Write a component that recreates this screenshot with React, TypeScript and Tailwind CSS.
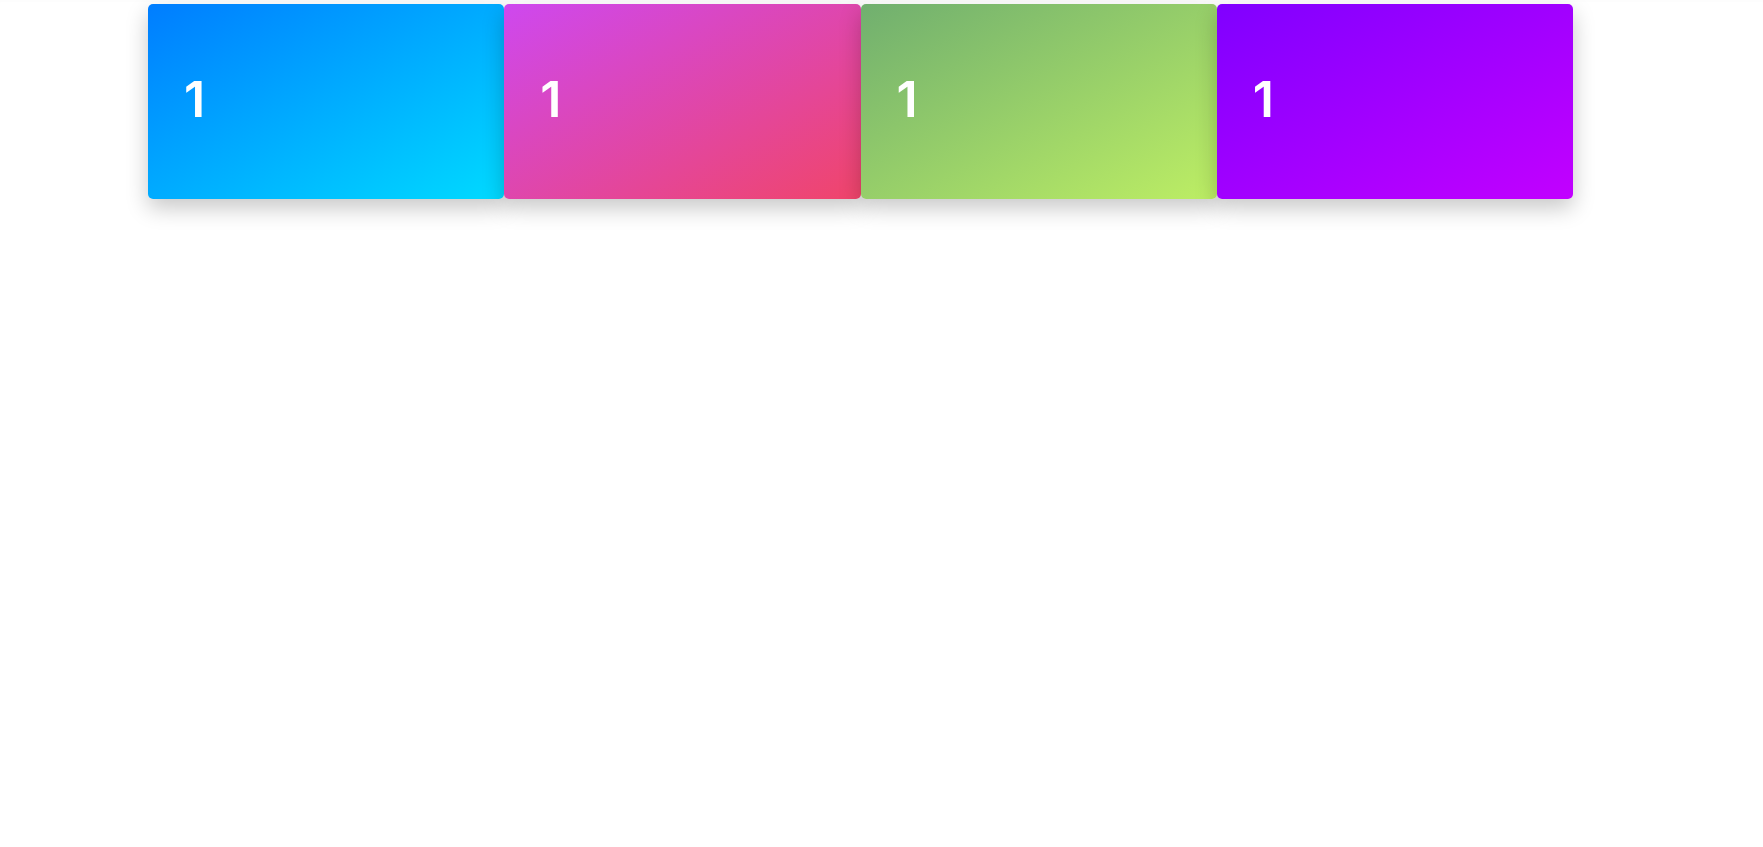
const cards = [
  { id: "blue", value: 1, gradient: "from-[#007dff] to-[#00daff]" },
  { id: "pink", value: 1, gradient: "from-[#ce48ef] to-[#f0456a]" },
  { id: "green", value: 1, gradient: "from-[#70af6f] to-[#bdee64]" },
  { id: "violet", value: 1, gradient: "from-[#8000ff] to-[#c200ff]" },
];

export default function App() {
  return (
    <main className="min-h-screen bg-white pt-1 pr-[190px] pl-[148px] font-[Inter,sans-serif] shadow-[inset_0_2px_2px_rgba(0,0,0,0.01)]">
      <section className="grid grid-cols-4">
        {cards.map((card) => (
          <div
            key={card.id}
            className={`flex h-[195px] items-center rounded-[5px] bg-linear-to-br/srgb px-9 pb-1.5 text-white shadow-[0_9px_22px_rgba(0,0,0,0.22)] ${card.gradient}`}
          >
            <p className="text-[50px] leading-[60px] font-semibold">{card.value}</p>
          </div>
        ))}
      </section>
    </main>
  );
}
